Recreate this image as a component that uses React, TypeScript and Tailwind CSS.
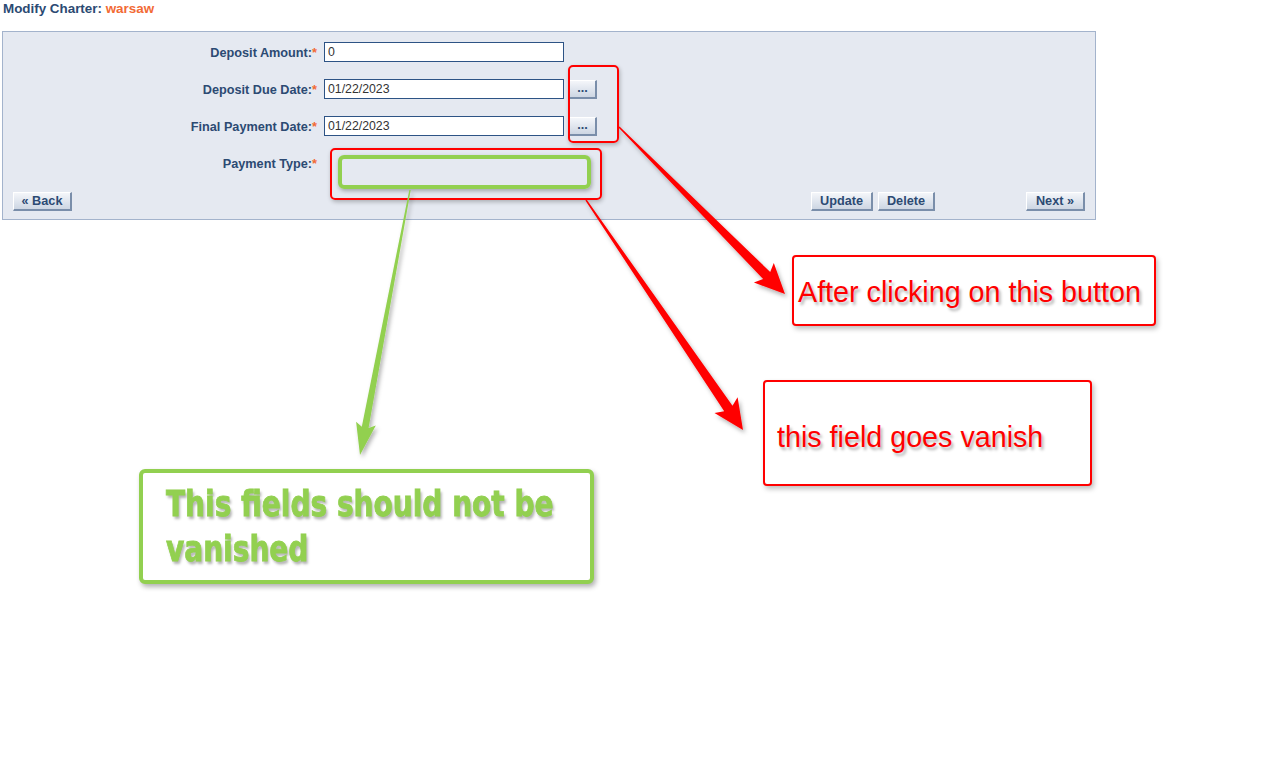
import React from "react";

// tapered arrow: thin at the tail, wide at the head
function arrowPoints(
  sx: number,
  sy: number,
  tx: number,
  ty: number,
  tail: number,
  shaft: number,
  headLen: number,
  headW: number
) {
  const dx = tx - sx;
  const dy = ty - sy;
  const len = Math.hypot(dx, dy);
  const ux = dx / len;
  const uy = dy / len;
  const nx = -uy;
  const ny = ux;
  const bx = tx - ux * headLen;
  const by = ty - uy * headLen;
  const wx = tx - ux * (headLen + 4);
  const wy = ty - uy * (headLen + 4);
  const pts = [
    [sx + (nx * tail) / 2, sy + (ny * tail) / 2],
    [bx + (nx * shaft) / 2, by + (ny * shaft) / 2],
    [wx + (nx * headW) / 2, wy + (ny * headW) / 2],
    [tx, ty],
    [wx - (nx * headW) / 2, wy - (ny * headW) / 2],
    [bx - (nx * shaft) / 2, by - (ny * shaft) / 2],
    [sx - (nx * tail) / 2, sy - (ny * tail) / 2],
  ];
  return pts.map((p) => p.map((v) => v.toFixed(1)).join(",")).join(" ");
}

function Btn({
  children,
  className = "",
}: {
  children: React.ReactNode;
  className?: string;
}) {
  return (
    <button
      className={`h-[19px] bg-gradient-to-b from-[#f4f6fa] to-[#cdd6e3] border border-t-white border-l-white border-b-2 border-r-2 border-b-[#7a8eaa] border-r-[#7a8eaa] text-[12.7px] font-bold text-[#2c4a73] leading-none ${className}`}
    >
      {children}
    </button>
  );
}

function Label({ text }: { text: string }) {
  return (
    <div className="h-[20px] text-right text-[12.7px] font-bold text-[#2c4a73] leading-[22px]">
      {text}
      <span className="text-[#f26a35]">*</span>
    </div>
  );
}

function TextInput({ value }: { value: string }) {
  return (
    <input
      type="text"
      readOnly
      value={value}
      className="w-[240px] h-[20px] border border-[#2d5385] bg-white px-[3px] text-[12.3px] text-[#333] outline-none"
    />
  );
}

export default function App() {
  return (
    <div className="relative w-[1273px] h-[757px] bg-white overflow-hidden font-['Tahoma','Liberation_Sans',Arial,sans-serif]">
      <h1 className="h-[31px] pl-[3px] pt-[1px] text-[13.4px] font-bold text-[#2c4a73] leading-[15px]">
        Modify Charter: <span className="text-[#f26a35]">warsaw</span>
      </h1>

      <div className="ml-[2px] w-[1094px] border border-[#a3b3cc] bg-[#e5e9f1] pt-[10px] pb-[8px]">
        <div className="grid grid-cols-[314px_auto] gap-x-[7px] gap-y-[17px] items-center">
          <Label text="Deposit Amount:" />
          <TextInput value="0" />

          <Label text="Deposit Due Date:" />
          <div className="flex items-center gap-[5px]">
            <TextInput value="01/22/2023" />
            <Btn className="w-[28px]">...</Btn>
          </div>

          <Label text="Final Payment Date:" />
          <div className="flex items-center gap-[5px]">
            <TextInput value="01/22/2023" />
            <Btn className="w-[28px]">...</Btn>
          </div>

          <Label text="Payment Type:" />
          <div className="h-[20px]" />
        </div>

        <div className="flex items-center mt-[19px] px-[10px]">
          <Btn className="w-[59px]">« Back</Btn>
          <div className="flex-1" />
          <Btn className="w-[62px]">Update</Btn>
          <Btn className="w-[57px] ml-[5px]">Delete</Btn>
          <Btn className="w-[59px] ml-[91px]">Next »</Btn>
        </div>
      </div>

      {/* annotations */}
      <div className="absolute left-[568px] top-[65px] w-[51px] h-[78px] border-2 border-[#ff0000] rounded-[5px] shadow-[1px_2px_4px_rgba(0,0,0,0.25)]" />
      <div className="absolute left-[330px] top-[148px] w-[272px] h-[52px] border-2 border-[#ff0000] rounded-[5px] shadow-[1px_2px_4px_rgba(0,0,0,0.25)]" />
      <div className="absolute left-[338px] top-[155px] w-[253px] h-[34px] border-4 border-[#92d050] rounded-[6px] shadow-[1px_2px_4px_rgba(0,0,0,0.3)]" />

      <svg
        className="absolute inset-0 pointer-events-none"
        width="1273"
        height="757"
      >
        <defs>
          <filter id="sh" x="-20%" y="-20%" width="140%" height="140%">
            <feDropShadow dx="2" dy="3" stdDeviation="2" floodColor="#000" floodOpacity="0.3" />
          </filter>
        </defs>
        <polygon
          points={arrowPoints(619, 127, 785, 294, 1.5, 10, 26, 28)}
          fill="#ff0000"
          filter="url(#sh)"
        />
        <polygon
          points={arrowPoints(586, 200, 743, 430, 1.5, 10, 26, 28)}
          fill="#ff0000"
          filter="url(#sh)"
        />
        <polygon
          points={arrowPoints(410, 190, 360, 455, 1.5, 7, 28, 20)}
          fill="#92d050"
          filter="url(#sh)"
        />
      </svg>

      <div className="absolute left-[792px] top-[255px] w-[364px] h-[71px] border-2 border-[#ff0000] rounded-[4px] shadow-[2px_3px_5px_rgba(0,0,0,0.25)] bg-white">
        <div className="absolute left-[4px] top-[21px] whitespace-nowrap font-['Liberation_Sans',Arial,sans-serif] text-[28.7px] leading-none text-[#ff0000] [text-shadow:2px_3px_3px_rgba(0,0,0,0.3)]">
          After clicking on this button
        </div>
      </div>

      <div className="absolute left-[763px] top-[380px] w-[329px] h-[106px] border-2 border-[#ff0000] rounded-[4px] shadow-[2px_3px_5px_rgba(0,0,0,0.25)] bg-white">
        <div className="absolute left-[12px] top-[41px] whitespace-nowrap font-['Liberation_Sans',Arial,sans-serif] text-[28.7px] leading-none text-[#ff0000] [text-shadow:2px_3px_3px_rgba(0,0,0,0.3)]">
          this field goes vanish
        </div>
      </div>

      <div className="absolute left-[139px] top-[469px] w-[455px] h-[115px] border-4 border-[#92d050] rounded-[6px] shadow-[2px_3px_5px_rgba(0,0,0,0.3)] bg-white">
        <div className="absolute left-[23px] top-[8px] origin-left scale-x-[0.865] whitespace-nowrap font-['Impact','Liberation_Sans_Narrow','DejaVu_Sans_Condensed',sans-serif] font-black text-[36px] leading-[45px] text-[#92d050] [-webkit-text-stroke:0.8px_#92d050] [text-shadow:2px_3px_3px_rgba(0,0,0,0.3)]">
          This fields should not be
          <br />
          vanished
        </div>
      </div>
    </div>
  );
}
